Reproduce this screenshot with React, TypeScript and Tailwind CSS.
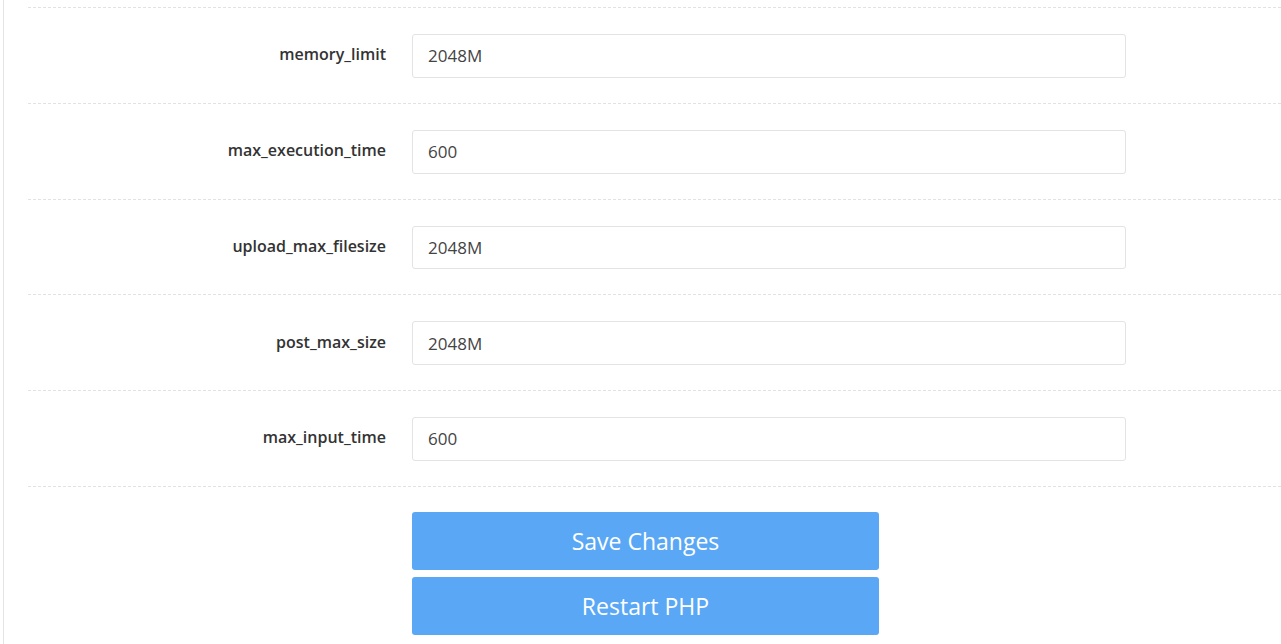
import React from 'react';

const settings = [
  { name: 'memory_limit', value: '2048M' },
  { name: 'max_execution_time', value: '600' },
  { name: 'upload_max_filesize', value: '2048M' },
  { name: 'post_max_size', value: '2048M' },
  { name: 'max_input_time', value: '600' },
];

export default function App() {
  return (
    <div className="h-[644px] overflow-hidden bg-white font-['Open_Sans',sans-serif]">
      <div className="ml-[3px] h-full border-l border-[#e4e4e4] pl-[24px]">
        <div className="h-[8px] border-b border-dashed border-[#e2e2e2]" />

        {settings.map((s) => (
          <div
            key={s.name}
            className="flex items-center pt-[26px] pb-[25px] border-b border-dashed border-[#e2e2e2]"
          >
            <label className="w-[358px] shrink-0 pb-[3px] text-right text-[16px] font-semibold text-[#333]">
              {s.name}
            </label>
            <input
              type="text"
              defaultValue={s.value}
              className="ml-[26px] h-[43.75px] w-[714px] rounded-[3px] border border-[#e3e3e3] px-[15px] text-[17px] text-[#444] outline-none"
            />
          </div>
        ))}

        <div className="flex flex-col gap-[7px] pt-[25px] pl-[384px]">
          <button className="h-[58px] w-[467px] rounded-[3px] bg-[#5aa8f5] text-[23px] text-white">
            Save Changes
          </button>
          <button className="h-[58px] w-[467px] rounded-[3px] bg-[#5aa8f5] text-[23px] text-white">
            Restart PHP
          </button>
        </div>
      </div>
    </div>
  );
}
